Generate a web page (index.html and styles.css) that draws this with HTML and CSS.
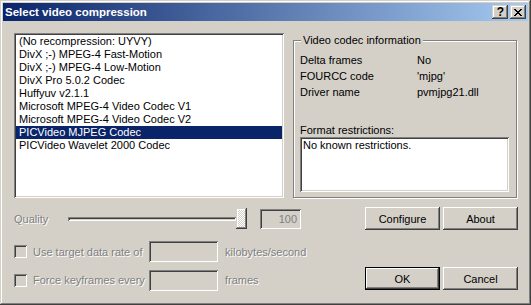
FILE: index.html
```html
<!DOCTYPE html>
<html lang="en">
<head>
    <meta charset="UTF-8">
    <meta name="viewport" content="width=device-width, initial-scale=1.0">
    <title>Select video compression</title>
    <link rel="stylesheet" href="styles.css">
</head>
<body>
    <div class="window">
        <div class="titlebar">
            <span class="title">Select video compression</span>
            <span class="title-buttons">
                <span class="tbtn help">?</span>
                <span class="tbtn close">
                    <svg width="8" height="7" viewBox="0 0 8 7" shape-rendering="crispEdges">
                        <path d="M0 0h2v1h-2zM6 0h2v1h-2zM1 1h2v1h-2zM5 1h2v1h-2zM2 2h4v1h-4zM3 3h2v1h-2zM2 4h4v1h-4zM1 5h2v1h-2zM5 5h2v1h-2zM0 6h2v1h-2zM6 6h2v1h-2z" fill="#000"/>
                    </svg>
                </span>
            </span>
        </div>
        <div class="content">
            <div class="top">
                <ul class="list">
                    <li>(No recompression: UYVY)</li>
                    <li>DivX ;-) MPEG-4 Fast-Motion</li>
                    <li>DivX ;-) MPEG-4 Low-Motion</li>
                    <li>DivX Pro 5.0.2 Codec</li>
                    <li>Huffyuv v2.1.1</li>
                    <li>Microsoft MPEG-4 Video Codec V1</li>
                    <li>Microsoft MPEG-4 Video Codec V2</li>
                    <li class="selected">PICVideo MJPEG Codec</li>
                    <li>PICVideo Wavelet 2000 Codec</li>
                </ul>
                <div class="group">
                    <div class="legend">Video codec information</div>
                    <div class="info-rows">
                        <div class="info-row"><span class="info-label">Delta frames</span><span>No</span></div>
                        <div class="info-row"><span class="info-label">FOURCC code</span><span>'mjpg'</span></div>
                        <div class="info-row"><span class="info-label">Driver name</span><span>pvmjpg21.dll</span></div>
                    </div>
                    <div class="restr-label">Format restrictions:</div>
                    <div class="restr-box">No known restrictions.</div>
                </div>
            </div>

            <div class="row row-quality">
                <span class="disabled quality-label">Quality</span>
                <div class="slider">
                    <div class="track"></div>
                    <div class="thumb"></div>
                </div>
                <div class="edit edit-quality">100</div>
                <div class="buttons">
                    <button class="btn">Configure</button>
                    <button class="btn">About</button>
                </div>
            </div>

            <div class="row row-rate">
                <span class="checkbox"></span>
                <span class="disabled check-label">Use target data rate of</span>
                <div class="edit edit-num"></div>
                <span class="disabled unit">kilobytes/second</span>
            </div>

            <div class="row row-keys">
                <span class="checkbox"></span>
                <span class="disabled check-label">Force keyframes every</span>
                <div class="edit edit-num"></div>
                <span class="disabled unit">frames</span>
                <div class="buttons">
                    <button class="btn btn-default">OK</button>
                    <button class="btn">Cancel</button>
                </div>
            </div>
        </div>
    </div>
</body>
</html>
```

FILE: styles.css
```css
body {
    margin: 0;
    font-family: "Liberation Sans", Arial, sans-serif;
    font-size: 11px;
    color: #000;
    background-color: #d4d0c8;
}
.window {
    width: 531px;
    height: 305px;
    box-sizing: border-box;
    padding: 3px;
    background-color: #d4d0c8;
    box-shadow: inset -1px -1px #404040, inset 1px 1px #d4d0c8,
                inset -2px -2px #808080, inset 2px 2px #fff;
}
.titlebar {
    height: 18px;
    display: flex;
    align-items: center;
    justify-content: space-between;
    padding: 0 2px;
    background: linear-gradient(to right, #0a246a, #a6caf0);
}
.title {
    color: #fff;
    font-weight: bold;
    font-size: 11.5px;
}
.title-buttons {
    display: flex;
    gap: 2px;
}
.tbtn {
    width: 16px;
    height: 14px;
    box-sizing: border-box;
    display: flex;
    align-items: center;
    justify-content: center;
    background-color: #d4d0c8;
    box-shadow: inset -1px -1px #404040, inset 1px 1px #d4d0c8,
                inset -2px -2px #808080, inset 2px 2px #fff;
}
.help {
    font-weight: bold;
    font-size: 12px;
    line-height: 14px;
    padding-left: 1px;
}
.close svg {
    display: block;
}
.content {
    padding: 12px 10px 0 11px;
}
.top {
    display: flex;
    align-items: flex-start;
}
.list {
    width: 270px;
    height: 165px;
    box-sizing: border-box;
    margin: 0;
    padding: 2px;
    list-style: none;
    background-color: #fff;
    box-shadow: inset 1px 1px #808080, inset -1px -1px #fff,
                inset 2px 2px #404040, inset -2px -2px #d4d0c8;
}
.list li {
    height: 13px;
    line-height: 13px;
    padding-left: 3px;
    white-space: nowrap;
}
.list li.selected {
    background-color: #0a246a;
    color: #fff;
}
.group {
    width: 224px;
    height: 158px;
    box-sizing: border-box;
    margin: 7px 0 0 9px;
    padding: 0 7px 0 6px;
    border: 1px solid #808080;
    box-shadow: inset 1px 1px #fff, 1px 1px #fff;
}
.legend {
    display: table;
    height: 13px;
    line-height: 13px;
    margin: -7px 0 0 1px;
    padding: 0 2px;
    background-color: #d4d0c8;
}
.info-rows {
    margin-top: 5px;
}
.info-row {
    display: flex;
    height: 16px;
    line-height: 16px;
}
.info-label {
    width: 117px;
}
.restr-label {
    margin-top: 24px;
    height: 13px;
    line-height: 13px;
}
.restr-box {
    height: 55px;
    box-sizing: border-box;
    padding: 2px 3px;
    line-height: 12px;
    background-color: #fff;
    box-shadow: inset 1px 1px #808080, inset -1px -1px #fff,
                inset 2px 2px #404040, inset -2px -2px #d4d0c8;
}
.row {
    display: flex;
    align-items: center;
}
.disabled {
    color: #808080;
    text-shadow: 1px 1px #fff;
}
.row-quality {
    margin-top: 9px;
    height: 23px;
}
.quality-label {
    width: 54px;
}
.slider {
    width: 179px;
    height: 21px;
    display: flex;
    align-items: center;
}
.track {
    flex: 1;
    height: 4px;
    box-shadow: inset 1px 1px #808080, inset -1px -1px #fff,
                inset 2px 2px #404040, inset -2px -2px #d4d0c8;
}
.thumb {
    width: 11px;
    height: 21px;
    background: repeating-conic-gradient(#d4d0c8 0 25%, #fff 0 50%) 0 0 / 2px 2px;
    box-shadow: inset -1px -1px #404040, inset 1px 1px #d4d0c8,
                inset -2px -2px #808080, inset 2px 2px #fff;
}
.edit {
    box-sizing: border-box;
    background-color: #d4d0c8;
    box-shadow: inset 1px 1px #808080, inset -1px -1px #fff,
                inset 2px 2px #404040, inset -2px -2px #d4d0c8;
}
.edit-quality {
    width: 41px;
    height: 20px;
    margin-left: 13px;
    padding-right: 4px;
    text-align: right;
    line-height: 20px;
    color: #808080;
}
.buttons {
    display: flex;
    gap: 3px;
    margin-left: auto;
}
.btn {
    width: 75px;
    height: 23px;
    padding: 0;
    border: none;
    font-family: inherit;
    font-size: 11px;
    color: #000;
    background-color: #d4d0c8;
    box-shadow: inset -1px -1px #404040, inset 1px 1px #fff,
                inset -2px -2px #808080, inset 2px 2px #d4d0c8;
}
.btn-default {
    box-shadow: inset 0 0 0 1px #000, inset -2px -2px #404040, inset 2px 2px #fff,
                inset -3px -3px #808080;
}
.row-rate {
    margin-top: 11px;
    height: 21px;
}
.checkbox {
    width: 13px;
    height: 13px;
    box-sizing: border-box;
    background-color: #d4d0c8;
    box-shadow: inset 1px 1px #808080, inset -1px -1px #fff,
                inset 2px 2px #404040, inset -2px -2px #d4d0c8;
}
.check-label {
    width: 116px;
    margin-left: 6px;
}
.edit-num {
    width: 69px;
    height: 21px;
}
.unit {
    margin-left: 7px;
}
.row-keys {
    margin-top: 5px;
    height: 24px;
    align-items: flex-start;
}
.row-keys .checkbox,
.row-keys .check-label,
.row-keys .unit {
    margin-top: 7px;
}
.row-keys .edit-num {
    margin-top: 3px;
}
```
